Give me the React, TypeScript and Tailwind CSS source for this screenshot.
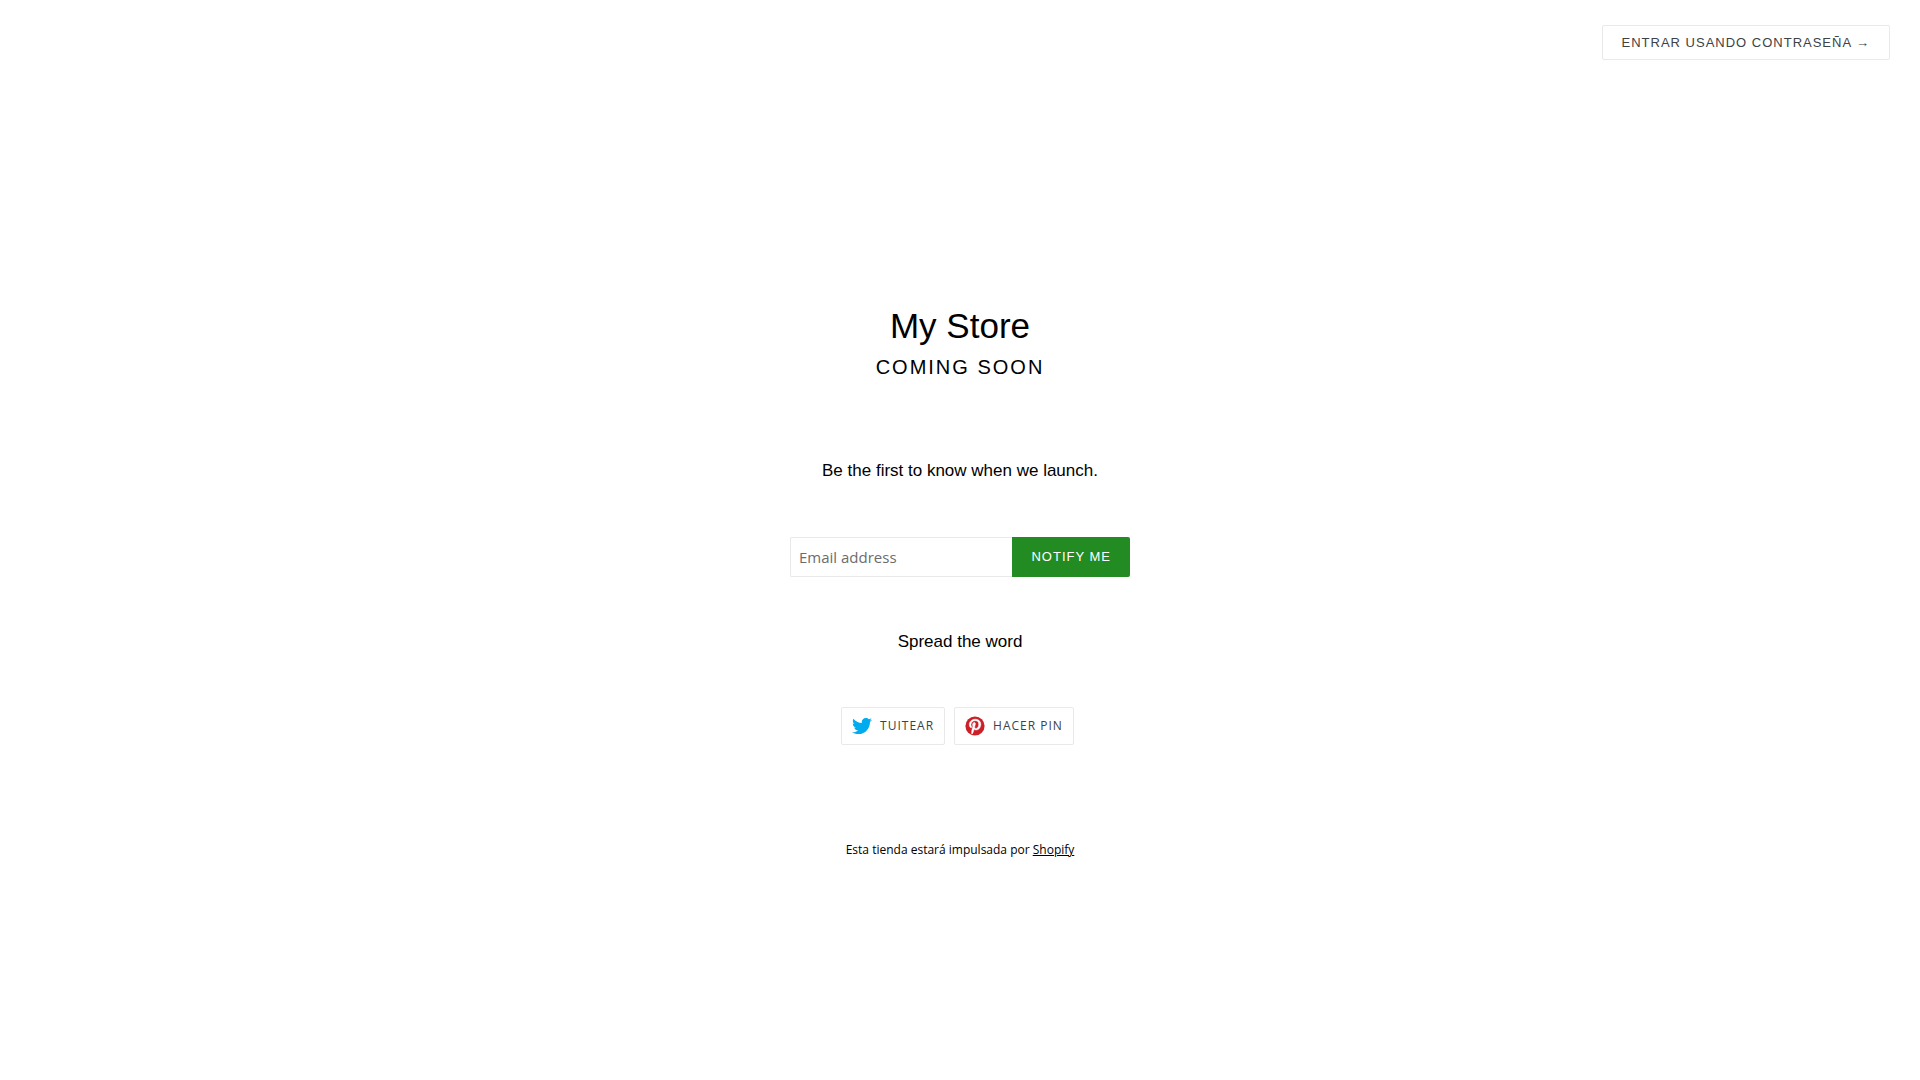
import type { FormEvent } from 'react';
import { FaTwitter } from 'react-icons/fa';

function PinterestIcon({ className }: { className?: string }) {
  return (
    <svg viewBox="0 0 20 20" className={className} aria-hidden="true">
      <circle cx="10" cy="10" r="9.6" fill="currentColor" />
      <path
        transform="translate(4.3 3) scale(0.03)"
        fill="#fff"
        stroke="#fff"
        strokeWidth="16"
        d="M204 6.5C101.4 6.5 0 74.9 0 185.6 0 256 39.6 296 63.6 296c9.9 0 15.6-27.6 15.6-35.4 0-9.3-23.7-29.1-23.7-67.8 0-80.4 61.2-137.4 140.4-137.4 68.1 0 118.5 38.7 118.5 109.8 0 53.1-21.3 152.7-90.3 152.7-24.9 0-46.2-18-46.2-43.8 0-37.8 26.4-74.4 26.4-113.4 0-66.2-93.9-54.2-93.9 25.8 0 16.8 2.1 35.4 9.6 50.7-13.8 59.4-42 147.9-42 209.1 0 18.9 2.7 37.5 4.5 56.4 3.4 3.8 1.7 3.4 6.9 1.5 50.4-69 48.6-82.5 71.4-172.8 12.3 23.4 44.1 36 69.3 36 106.2 0 153.9-103.5 153.9-196.8C384 71.3 298.2 6.5 204 6.5z"
      />
    </svg>
  );
}

const shareLinks = [
  { label: 'Tuitear', href: '#tuitear', Icon: FaTwitter, color: 'text-[#00aced]' },
  { label: 'Hacer pin', href: '#pin', Icon: PinterestIcon, color: 'text-[#cb2027]' },
];

export default function App() {
  const handleSubmit = (e: FormEvent) => {
    e.preventDefault();
  };

  return (
    <div className="min-h-screen flex flex-col bg-white text-black font-['Liberation_Sans',Arial,sans-serif]">
      <header className="flex justify-end px-[30px] py-[25px]">
        <a
          href="#login"
          className="border border-[#e8e9eb] rounded-xs px-[19px] h-[35px] flex items-center text-[13px] tracking-[1px] uppercase text-[#3d4246]"
        >
          Entrar usando contraseña →
        </a>
      </header>

      <main className="flex-1 flex flex-col items-center justify-center px-4 pb-px text-center">
        <h1 className="text-[35px] leading-[44px]">My Store</h1>
        <h2 className="mt-[5px] text-[20px] leading-[28px] tracking-[2px] uppercase">Coming soon</h2>

        <p className="mt-[77px] text-[17px] leading-[26px]">Be the first to know when we launch.</p>

        <form onSubmit={handleSubmit} className="mt-[53px] flex w-full max-w-[340px]">
          <input
            type="email"
            aria-label="Email address"
            placeholder="Email address"
            className="flex-1 min-w-0 h-10 px-2 border border-r-0 border-[#e8e9eb] rounded-l-xs text-[15px] font-['Open_Sans',sans-serif] placeholder:text-[#6c6c6c] outline-none"
          />
          <button
            type="submit"
            className="h-10 px-[19px] rounded-r-xs bg-[#228b22] text-white text-[13px] tracking-[1px] uppercase"
          >
            Notify me
          </button>
        </form>

        <p className="mt-[52px] text-[17px] leading-[26px]">Spread the word</p>

        <div className="mt-[52px] flex gap-[9px] pr-[5px] font-['Open_Sans',sans-serif]">
          {shareLinks.map(({ label, href, Icon, color }) => (
            <a
              key={label}
              href={href}
              className="flex items-center gap-2 h-[38px] px-[10px] border border-[#e8e9eb] rounded-xs text-[12px] tracking-[1px] uppercase text-[#3d4246]"
            >
              <Icon className={`size-5 ${color}`} />
              {label}
            </a>
          ))}
        </div>

        <footer className="mt-[95px] text-[12px] leading-[20px] font-['Open_Sans',sans-serif]">
          Esta tienda estará impulsada por <a href="#shopify" className="underline">Shopify</a>
        </footer>
      </main>
    </div>
  );
}
